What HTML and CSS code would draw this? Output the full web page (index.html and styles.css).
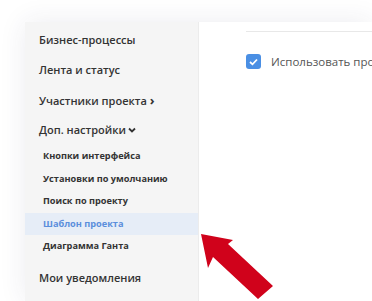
FILE: index.html
```html
<!DOCTYPE html>
<html>
<head>
    <title>Настройки проекта</title>
    <link rel="stylesheet" href="styles.css">
</head>
<body>
    <div class="page">
        <div class="panel">
            <!-- меню -->
            <div class="sidebar">
                <div class="item">Бизнес-процессы</div>
                <div class="item">Лента и статус</div>
                <div class="item">Участники проекта <span class="chev">&rsaquo;</span></div>
                <div class="item">Доп. настройки<svg class="down" width="8" height="6" viewBox="0 0 8 6"><path d="M1 1.5 L4 4.5 L7 1.5" fill="none" stroke="#333" stroke-width="1.8"/></svg></div>
                <div class="sub">
                    <div class="sub-item">Кнопки интерфейса</div>
                    <div class="sub-item">Установки по умолчанию</div>
                    <div class="sub-item">Поиск по проекту</div>
                    <div class="sub-item active">Шаблон проекта</div>
                    <div class="sub-item">Диаграмма Ганта</div>
                </div>
                <div class="item last">Мои уведомления</div>
            </div>

            <!-- контент -->
            <div class="main">
                <div class="rule"></div>
                <label class="check">
                    <span class="box"><svg width="9" height="8" viewBox="0 0 9 8"><path d="M1 4 L3.5 6.3 L8 1.5" fill="none" stroke="#fff" stroke-width="1.8"/></svg></span>
                    Использовать проект как шаблон
                </label>
            </div>
        </div>
    </div>

    <svg class="arrow" width="372" height="301" viewBox="0 0 372 301">
        <polygon points="201,234 233,240 228,244 273,286 258,299 213,257 208,268" fill="#d0021b"/>
    </svg>
</body>
</html>
```

FILE: styles.css
```css
body {
    margin: 0;
    background: #fff;
    font-family: 'Open Sans', 'Noto Sans', sans-serif;
    overflow: hidden;
    height: 301px;
}
.page {
    padding: 22px 0 0 25px;
}
.panel {
    display: flex;
    height: 279px;
    box-shadow: 0 0 26px rgba(40, 40, 90, 0.09);
}
.sidebar {
    width: 173px;
    background: #f5f5f5;
    border-right: 1px solid #ececec;
    padding-top: 3px;
}
.item {
    height: 30px;
    line-height: 30px;
    padding-left: 14px;
    font-size: 11px;
    font-weight: 600;
    color: #333;
    white-space: nowrap;
}
.chev {
    font-weight: 700;
    font-size: 13px;
}
.down {
    margin-left: 2px;
    vertical-align: 1px;
}
.sub-item {
    height: 22.5px;
    line-height: 22.5px;
    padding-left: 18px;
    font-size: 9.2px;
    font-weight: 700;
    color: #333;
}
.sub-item.active {
    background: #e6edf7;
    color: #5b8fdc;
}
.item.last {
    margin-top: 5px;
}
.main {
    flex: 1;
    background: #fff;
    padding: 9px 0 0 47px;
    overflow: hidden;
}
.rule {
    height: 1px;
    background: #e8e8e8;
}
.check {
    display: flex;
    align-items: center;
    margin-top: 22px;
    font-size: 11.5px;
    color: #555;
    white-space: nowrap;
}
.box {
    width: 15px;
    height: 15px;
    border-radius: 3px;
    background: #4a8fe4;
    display: flex;
    align-items: center;
    justify-content: center;
    margin-right: 10px;
    flex-shrink: 0;
}
.arrow {
    position: absolute;
    left: 0;
    top: 0;
}
```
